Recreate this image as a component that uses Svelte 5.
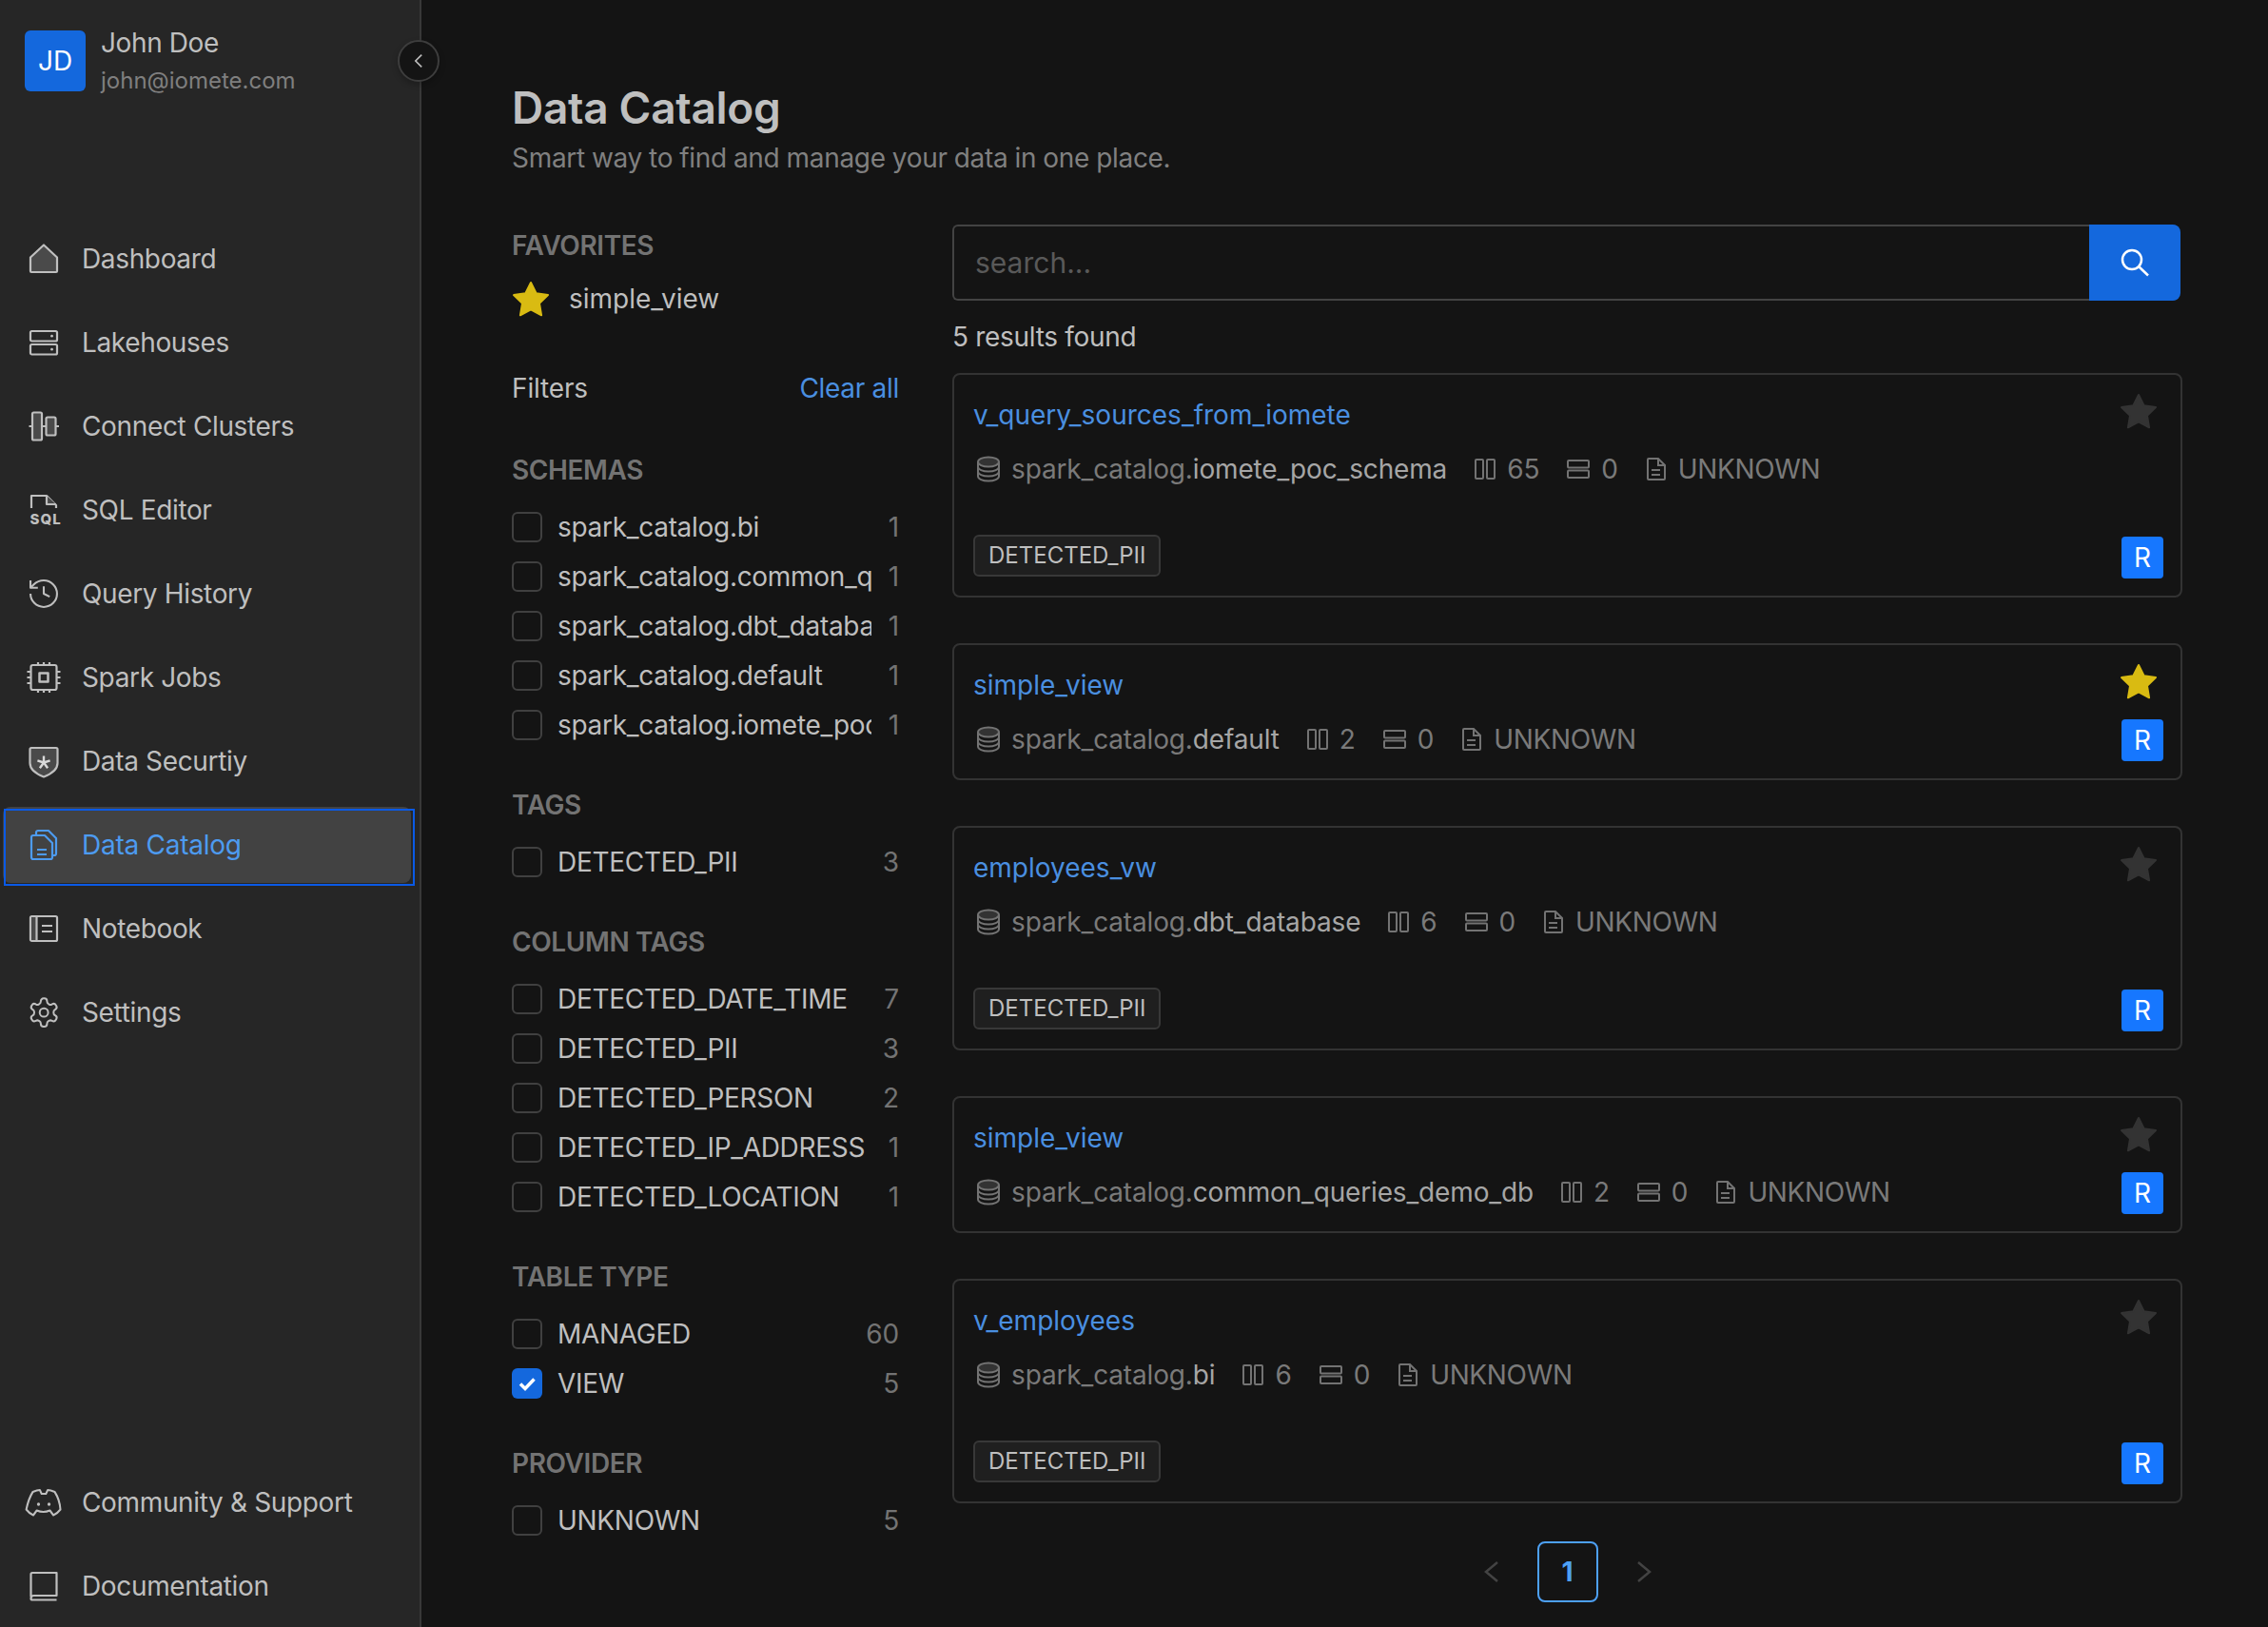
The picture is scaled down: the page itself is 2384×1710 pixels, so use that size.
<script lang="ts">
  const topNav = [
    { label: "Dashboard", icon: "home" },
    { label: "Lakehouses", icon: "lake" },
    { label: "Connect Clusters", icon: "connect" },
    { label: "SQL Editor", icon: "sql" },
    { label: "Query History", icon: "history" },
    { label: "Spark Jobs", icon: "chip" },
    { label: "Data Securtiy", icon: "shield" },
    { label: "Data Catalog", icon: "catalog", active: true },
    { label: "Notebook", icon: "notebook" },
    { label: "Settings", icon: "gear" },
  ];
  const bottomNav = [
    { label: "Community & Support", icon: "discord" },
    { label: "Documentation", icon: "book" },
  ];

  const filters = [
    {
      title: "SCHEMAS",
      rows: [
        ["spark_catalog.bi", 1],
        ["spark_catalog.common_queries_demo_db", 1],
        ["spark_catalog.dbt_database", 1],
        ["spark_catalog.default", 1],
        ["spark_catalog.iomete_poc_schema", 1],
      ],
    },
    { title: "TAGS", rows: [["DETECTED_PII", 3]] },
    {
      title: "COLUMN TAGS",
      rows: [
        ["DETECTED_DATE_TIME", 7],
        ["DETECTED_PII", 3],
        ["DETECTED_PERSON", 2],
        ["DETECTED_IP_ADDRESS", 1],
        ["DETECTED_LOCATION", 1],
      ],
    },
    { title: "TABLE TYPE", rows: [["MANAGED", 60], ["VIEW", 5, true]] },
    { title: "PROVIDER", rows: [["UNKNOWN", 5]] },
  ];

  const results = [
    { name: "v_query_sources_from_iomete", schema: "iomete_poc_schema", cols: 65, tag: true },
    { name: "simple_view", schema: "default", cols: 2, fav: true },
    { name: "employees_vw", schema: "dbt_database", cols: 6, tag: true },
    { name: "simple_view", schema: "common_queries_demo_db", cols: 2 },
    { name: "v_employees", schema: "bi", cols: 6, tag: true },
  ];
</script>

{#snippet star(cls)}
  <svg class={cls} viewBox="0 0 40 38"><polygon points="20,2 25.6,13.3 38,15.1 29,23.9 31.1,36.3 20,30.4 8.9,36.3 11,23.9 2,15.1 14.4,13.3" /></svg>
{/snippet}

{#snippet navIcon(name)}
  <svg class="nav-icon" viewBox="0 0 32 32">
    {#if name === "home"}
      <path class="fill" d="M2 14.5 16 1.5l14 13V29a1 1 0 0 1-1 1H3a1 1 0 0 1-1-1z" />
    {:else if name === "lake"}
      <rect x="2" y="4" width="28" height="10.5" rx="1.5" />
      <rect x="2" y="18" width="28" height="10.5" rx="1.5" />
      <circle class="dot" cx="24.5" cy="9.2" r="1.4" />
      <circle class="dot" cx="24.5" cy="23.2" r="1.4" />
    {:else if name === "connect"}
      <rect class="fill" x="4" y="1.5" width="10" height="29" rx="1.5" />
      <rect class="fill" x="18.5" y="6.5" width="10" height="19" rx="1.5" />
      <path d="M0.5 16H4M14 16h4.5M28.5 16H32" />
    {:else if name === "sql"}
      <path d="M3 14V1h16l10 10v3" />
      <path class="fill" d="M19 1v9h10" />
      <text class="sql-text" x="1.500" y="30.500">SQL</text>
    {:else if name === "history"}
      <g transform="translate(-2.600 -2.600) scale(1.550)" stroke-width="1.350">
        <path d="M3 12a9 9 0 1 0 9-9 9.750 9.750 0 0 0-6.740 2.740L3 8" />
        <path d="M3 3v5h5" />
        <path d="M12 7v5l4 2" />
      </g>
    {:else if name === "chip"}
      <rect x="2.500" y="3" width="27" height="26" rx="2" />
      <rect x="11.500" y="11.500" width="9" height="9" stroke-width="2.500" />
      <path d="M10 0v3M16 0v3M22 0v3M10 29v3M16 29v3M22 29v3M-1.500 10h4M-1.500 16h4M-1.500 22h4M29.500 10h4M29.500 16h4M29.500 22h4" />
    {:else if name === "shield"}
      <path class="fill" d="M1.500 3.500a1.500 1.500 0 0 1 1.500-1.500h26a1.500 1.500 0 0 1 1.500 1.500V18c0 6-5.500 11-14.500 14.500C7 29 1.500 24 1.500 18z" />
      <path class="star-lines" d="M16 10.500v7M16 17.500l6.600-2.200M16 17.500l4.100 5.700M16 17.500l-4.100 5.700M16 17.500l-6.600-2.200" />
    {:else if name === "catalog"}
      <g class="blue">
        <path d="M8 5V3a2 2 0 0 1 2-2h11l8 8v16a2 2 0 0 1-2 2h-2" />
        <path d="M5 6h12l8 8v15a2 2 0 0 1-2 2H5a2 2 0 0 1-2-2V8a2 2 0 0 1 2-2z" />
        <path d="M9 21h10M9 26h10" />
      </g>
    {:else if name === "notebook"}
      <rect x="2" y="3" width="28" height="26" rx="1.500" />
      <rect class="solid" x="3" y="4" width="5.500" height="24" />
      <path d="M8.500 3v26M14 13h11M14 19h11" />
    {:else if name === "gear"}
      <g transform="translate(-1.600 -1.600) scale(1.480)" stroke-width="1.350">
        <path d="M12.220 2h-.44a2 2 0 0 0-2 2v.18a2 2 0 0 1-1 1.730l-.43.250a2 2 0 0 1-2 0l-.15-.08a2 2 0 0 0-2.730.730l-.22.380a2 2 0 0 0 .730 2.730l.15.100a2 2 0 0 1 1 1.720v.510a2 2 0 0 1-1 1.740l-.15.090a2 2 0 0 0-.730 2.730l.22.380a2 2 0 0 0 2.730.730l.15-.08a2 2 0 0 1 2 0l.43.250a2 2 0 0 1 1 1.730V20a2 2 0 0 0 2 2h.44a2 2 0 0 0 2-2v-.18a2 2 0 0 1 1-1.730l.43-.250a2 2 0 0 1 2 0l.15.08a2 2 0 0 0 2.730-.730l.22-.39a2 2 0 0 0-.730-2.730l-.15-.08a2 2 0 0 1-1-1.740v-.5a2 2 0 0 1 1-1.740l.15-.09a2 2 0 0 0 .730-2.730l-.22-.38a2 2 0 0 0-2.730-.730l-.15.08a2 2 0 0 1-2 0l-.43-.250a2 2 0 0 1-1-1.730V4a2 2 0 0 0-2-2z" />
        <circle cx="12" cy="12" r="3" />
      </g>
    {:else if name === "discord"}
      <g transform="translate(1.300 0) scale(0.920 1)">
        <path d="M3.500 5C6 4 9 3 11.500 3l2 4h5l2-4c2.500 0 5.500 1 8 2 3.500 5 6 12 6.500 18.500-2.500 3-5.500 5-8 6l-4-5c-5 2-10 2-15 0l-4 5c-2.500-1-5.500-3-8-6C-2.500 17 0 10 3.500 5z" />
        <circle class="dot" cx="10" cy="18" r="1.800" />
        <circle class="dot" cx="22" cy="18" r="1.800" />
      </g>
    {:else if name === "book"}
      <path d="M2.500 27V3.500a1.500 1.500 0 0 1 1.500-1.500h25.500v24H5.500a3 3 0 0 0-3 3 1.500 1.500 0 0 0 1.500 1.500h25.500" />
    {/if}
  </svg>
{/snippet}

{#snippet navItem(item)}
  <div class="nav-item" class:active={item.active}>
    {@render navIcon(item.icon)}
    <span>{item.label}</span>
  </div>
{/snippet}

<div class="app">
  <aside class="sidebar">
    <div class="user">
      <div class="avatar">JD</div>
      <div>
        <div class="user-name">John Doe</div>
        <div class="user-mail">john@iomete.com</div>
      </div>
    </div>
    <button class="collapse" aria-label="Collapse sidebar">
      <svg viewBox="0 0 12 20" width="10" height="16"><path d="M10 2 2 10l8 8" /></svg>
    </button>
    <nav class="nav">
      {#each topNav as item}
        {@render navItem(item)}
      {/each}
    </nav>
    <nav class="nav bottom">
      {#each bottomNav as item}
        {@render navItem(item)}
      {/each}
    </nav>
  </aside>

  <main class="main">
    <h1>Data Catalog</h1>
    <p class="subtitle">Smart way to find and manage your data in one place.</p>

    <div class="columns">
      <section class="left">
        <div class="heading">FAVORITES</div>
        <div class="fav-row">
          {@render star("star gold")}
          <span>simple_view</span>
        </div>
        <div class="filters-head">
          <span>Filters</span>
          <span class="link clear">Clear all</span>
        </div>
        {#each filters as group}
          <div class="group">
            <div class="heading">{group.title}</div>
            <div class="rows">
              {#each group.rows as [label, count, checked]}
                <div class="row">
                  <span class="check" class:checked>
                    {#if checked}
                      <svg viewBox="0 0 32 32"><path d="M9 16.500l5 5 9.500-10" /></svg>
                    {/if}
                  </span>
                  <span class="row-label">{label}</span>
                  <span class="row-count">{count}</span>
                </div>
              {/each}
            </div>
          </div>
        {/each}
      </section>

      <section class="right">
        <div class="search">
          <input placeholder="search..." />
          <button aria-label="Search">
            <svg viewBox="0 0 32 32" width="32" height="32"><circle cx="13" cy="13" r="10" /><path d="M20.500 20.500 30 29.500" /></svg>
          </button>
        </div>
        <div class="count">5 results found</div>

        {#each results as res}
          <article class="card">
            <div class="card-body">
              <div class="link card-title">{res.name}</div>
              <div class="meta">
                <span class="meta-item">
                  <svg class="mi" width="26" height="28" viewBox="0 0 26 28">
                    <ellipse class="mi-top" cx="13" cy="6.500" rx="11" ry="5" />
                    <path d="M2 6.500v15c0 2.800 4.900 5 11 5s11-2.200 11-5v-15M2 11.500c0 2.800 4.900 5 11 5s11-2.200 11-5M2 16.500c0 2.800 4.900 5 11 5s11-2.200 11-5" />
                  </svg>
                  <span>spark_catalog.<span class="schema">{res.schema}</span></span>
                </span>
                <span class="meta-item">
                  <svg class="mi" width="22" height="24" viewBox="0 0 22 24"><rect x="1" y="2" width="8" height="20" rx="1" /><rect x="13" y="2" width="8" height="20" rx="1" /></svg>
                  <span>{res.cols}</span>
                </span>
                <span class="meta-item">
                  <svg class="mi" width="24" height="24" viewBox="0 0 24 24"><rect x="1" y="3" width="22" height="7.500" rx="1" /><rect x="1" y="13.500" width="22" height="7.500" rx="1" /></svg>
                  <span>0</span>
                </span>
                <span class="meta-item">
                  <svg class="mi" width="22" height="26" viewBox="0 0 22 26"><path d="M2 3a1 1 0 0 1 1-1h10l7 7v14a1 1 0 0 1-1 1H3a1 1 0 0 1-1-1zM13 2v7h7M6 14h9M6 19h9" /></svg>
                  <span class="kind">UNKNOWN</span>
                </span>
              </div>
              {#if res.tag}
                <span class="tag">DETECTED_PII</span>
              {/if}
            </div>
            <div class="card-side">
              {@render star(res.fav ? "star gold" : "star muted")}
              <span class="badge">R</span>
            </div>
          </article>
        {/each}

        <div class="pager">
          <svg viewBox="0 0 28 28" width="28" height="28"><path d="M20 4 8 14l12 10" /></svg>
          <span class="page">1</span>
          <svg viewBox="0 0 28 28" width="28" height="28"><path d="M8 4l12 10L8 24" /></svg>
        </div>
      </section>
    </div>
  </main>
</div>

<style>
  :global(body) {
    background: #141414;
  }

  .app {
    display: flex;
    height: 1710px;
    overflow: hidden;
    background: #141414;
    color: #bfbfbf;
    font-family: Inter, "Liberation Sans", sans-serif;
    font-size: 28px;
    line-height: 40px;
    letter-spacing: -0.15px;
  }

  /* sidebar */
  .sidebar {
    position: relative;
    display: flex;
    flex-direction: column;
    flex: none;
    box-sizing: border-box;
    width: 443px;
    padding-top: 32px;
    background: #262626;
    border-right: 2px solid #383838;
  }

  .user {
    display: flex;
    gap: 16px;
    padding-left: 26px;
    height: 64px;
  }

  .avatar {
    display: flex;
    align-items: center;
    justify-content: center;
    width: 64px;
    height: 64px;
    border-radius: 6px;
    background: #1468dd;
    color: #fff;
  }

  .user-name {
    line-height: 30px;
    margin-top: -2px;
    letter-spacing: -0.4px;
  }

  .user-mail {
    margin-top: 9px;
    line-height: 32px;
    font-size: 24px;
    letter-spacing: 0;
    color: #7f7f7f;
  }

  .collapse {
    position: absolute;
    top: 42px;
    left: 418px;
    display: flex;
    align-items: center;
    justify-content: center;
    box-sizing: border-box;
    width: 44px;
    height: 44px;
    padding: 0;
    border: 2px solid #3d3d3d;
    border-radius: 50%;
    background: #141414;
    box-shadow: 0 3px 6px rgba(0, 0, 0, 0.25);
  }

  .collapse path {
    fill: none;
    stroke: #bfbfbf;
    stroke-width: 2;
  }

  .nav {
    display: flex;
    flex-direction: column;
    gap: 8px;
    margin-top: 136px;
  }

  .nav.bottom {
    margin-top: auto;
    padding-bottom: 3px;
  }

  .nav-item {
    position: relative;
    display: flex;
    align-items: center;
    gap: 24px;
    box-sizing: border-box;
    width: 432px;
    height: 80px;
    margin-left: 5px;
    padding-left: 25px;
    letter-spacing: -0.35px;
  }

  .nav-item.active {
    width: 429px;
    margin-left: 3px;
    padding-left: 27px;
    border-radius: 8px;
    background: #424242;
    color: #4d9bf0;
    letter-spacing: -0.25px;
  }

  /* selection frame sits a little off the filled row */
  .nav-item.active::after {
    content: "";
    position: absolute;
    inset: 2px -4px -3px 1px;
    border: 2.500px solid #0a5ae6;
  }

  .nav-icon {
    flex: none;
    width: 32px;
    height: 32px;
    overflow: visible;
    fill: none;
    stroke: #bfbfbf;
    stroke-width: 2.200;
    stroke-linejoin: round;
  }

  .nav-icon .fill {
    fill: #4a4a4a;
  }

  .nav-icon .solid {
    fill: #4a4a4a;
    stroke: none;
  }

  .nav-icon .dot {
    fill: #bfbfbf;
    stroke: none;
  }

  .nav-icon .star-lines {
    stroke: #d9d9d9;
    stroke-width: 2.400;
  }

  .nav-icon .blue {
    stroke: #4d9bf0;
  }

  .sql-text {
    fill: #bfbfbf;
    stroke: none;
    font-size: 15px;
    font-weight: 800;
    letter-spacing: 1px;
  }

  /* main area */
  .main {
    flex: 1;
    box-sizing: border-box;
    min-width: 0;
    padding: 81px 90px 0 95px;
  }

  h1 {
    margin: 0;
    font-size: 46px;
    line-height: 64px;
    font-weight: 600;
    letter-spacing: -0.3px;
    color: #bfbfbf;
  }

  .subtitle {
    margin: 1px 0 0;
    color: #808080;
    letter-spacing: -0.3px;
    word-spacing: -0.5px;
  }

  .columns {
    display: grid;
    grid-template-columns: 407px 1fr;
    gap: 56px;
    margin-top: 50px;
  }

  .heading {
    font-weight: 600;
    letter-spacing: -0.4px;
    color: #737373;
    line-height: 44px;
  }

  .group .heading {
    line-height: 40px;
  }

  .fav-row {
    display: flex;
    align-items: center;
    gap: 20px;
    margin-top: 16px;
    height: 36px;
    letter-spacing: 0;
  }

  .star {
    width: 40px;
    height: 38px;
    flex: none;
  }

  .star.gold {
    fill: #d9bb12;
    stroke: #d9bb12;
    stroke-width: 2;
    stroke-linejoin: round;
  }

  .star.muted {
    fill: #333;
    stroke: #333;
    stroke-width: 2;
    stroke-linejoin: round;
  }

  .filters-head {
    display: flex;
    justify-content: space-between;
    margin-top: 56px;
  }

  .link {
    color: #4a8fe0;
  }

  .clear {
    letter-spacing: -0.3px;
  }

  .group {
    margin-top: 46px;
  }

  .group + .group {
    margin-top: 48px;
  }

  .rows {
    display: flex;
    flex-direction: column;
    gap: 20px;
    margin-top: 24px;
  }

  .row {
    display: flex;
    align-items: center;
    height: 32px;
  }

  .check {
    display: block;
    flex: none;
    box-sizing: border-box;
    width: 32px;
    height: 32px;
    margin-right: 16px;
    border: 2px solid #404040;
    border-radius: 6px;
  }

  .check.checked {
    border: none;
    background: #1468dd;
  }

  .check svg {
    display: block;
    fill: none;
    stroke: #fff;
    stroke-width: 3.500;
  }

  .row-label {
    width: 330px;
    overflow: hidden;
    white-space: nowrap;
    letter-spacing: -0.3px;
  }

  .row-count {
    margin-left: auto;
    color: #737373;
  }

  .search {
    display: flex;
    height: 80px;
  }

  .search input {
    flex: 1;
    min-width: 0;
    box-sizing: border-box;
    padding: 0 22px;
    border: 2px solid #434343;
    border-right: none;
    border-radius: 6px 0 0 6px;
    outline: none;
    background: transparent;
    color: #bfbfbf;
    font: inherit;
    font-size: 30px;
    letter-spacing: 0;
  }

  .search input::placeholder {
    color: #595959;
  }

  .search button {
    display: flex;
    align-items: center;
    justify-content: center;
    width: 96px;
    margin-right: 2px;
    padding: 0;
    border: none;
    border-radius: 0 8px 8px 0;
    background: #1468dd;
  }

  .search svg {
    fill: none;
    stroke: #fff;
    stroke-width: 2.500;
  }

  .count {
    margin: 18px 0;
    letter-spacing: -0.3px;
  }

  .card {
    display: flex;
    justify-content: space-between;
    box-sizing: border-box;
    margin-bottom: 48px;
    padding: 20px 18px 18px 20px;
    border: 2px solid #333;
    border-radius: 8px;
  }

  .card-title {
    margin-top: 2px;
    letter-spacing: 0;
  }

  .meta {
    display: flex;
    align-items: center;
    gap: 29px;
    margin-top: 17px;
    margin-bottom: 3px;
    color: #7a7a7a;
    letter-spacing: -0.15px;
  }

  .meta-item {
    display: flex;
    align-items: center;
    gap: 12px;
    white-space: nowrap;
  }

  .meta-item:first-child {
    gap: 11px;
  }

  .meta-item:first-child svg {
    margin-left: 3px;
  }

  .kind {
    letter-spacing: -0.35px;
  }

  .schema {
    color: #a6a6a6;
  }

  .mi {
    flex: none;
    fill: none;
    stroke: #737373;
    stroke-width: 2;
  }

  .mi-top {
    fill: #333;
  }

  .tag {
    display: block;
    width: fit-content;
    box-sizing: border-box;
    height: 44px;
    margin-top: 49px;
    margin-bottom: 2px;
    padding: 0 14px;
    border: 2px solid #383838;
    border-radius: 6px;
    background: #1f1f1f;
    color: #bfbfbf;
    font-size: 24px;
    line-height: 40px;
    letter-spacing: 0;
  }

  .card-side {
    display: flex;
    flex-direction: column;
    justify-content: space-between;
    align-items: flex-start;
    width: 44px;
  }

  .card-side .star {
    margin: -1px 0 0 -2px;
  }

  .badge {
    display: flex;
    align-items: center;
    justify-content: center;
    width: 44px;
    height: 44px;
    border-radius: 4px;
    background: #1677ff;
    color: #fff;
  }

  .pager {
    display: flex;
    justify-content: center;
    align-items: center;
    gap: 34px;
    margin-top: -8px;
  }

  .pager svg {
    fill: none;
    stroke: #434343;
    stroke-width: 2.500;
  }

  .page {
    display: flex;
    align-items: center;
    justify-content: center;
    box-sizing: border-box;
    width: 64px;
    height: 64px;
    border: 2px solid #4da0f5;
    border-radius: 8px;
    color: #4da0f5;
    font-weight: 700;
  }
</style>
